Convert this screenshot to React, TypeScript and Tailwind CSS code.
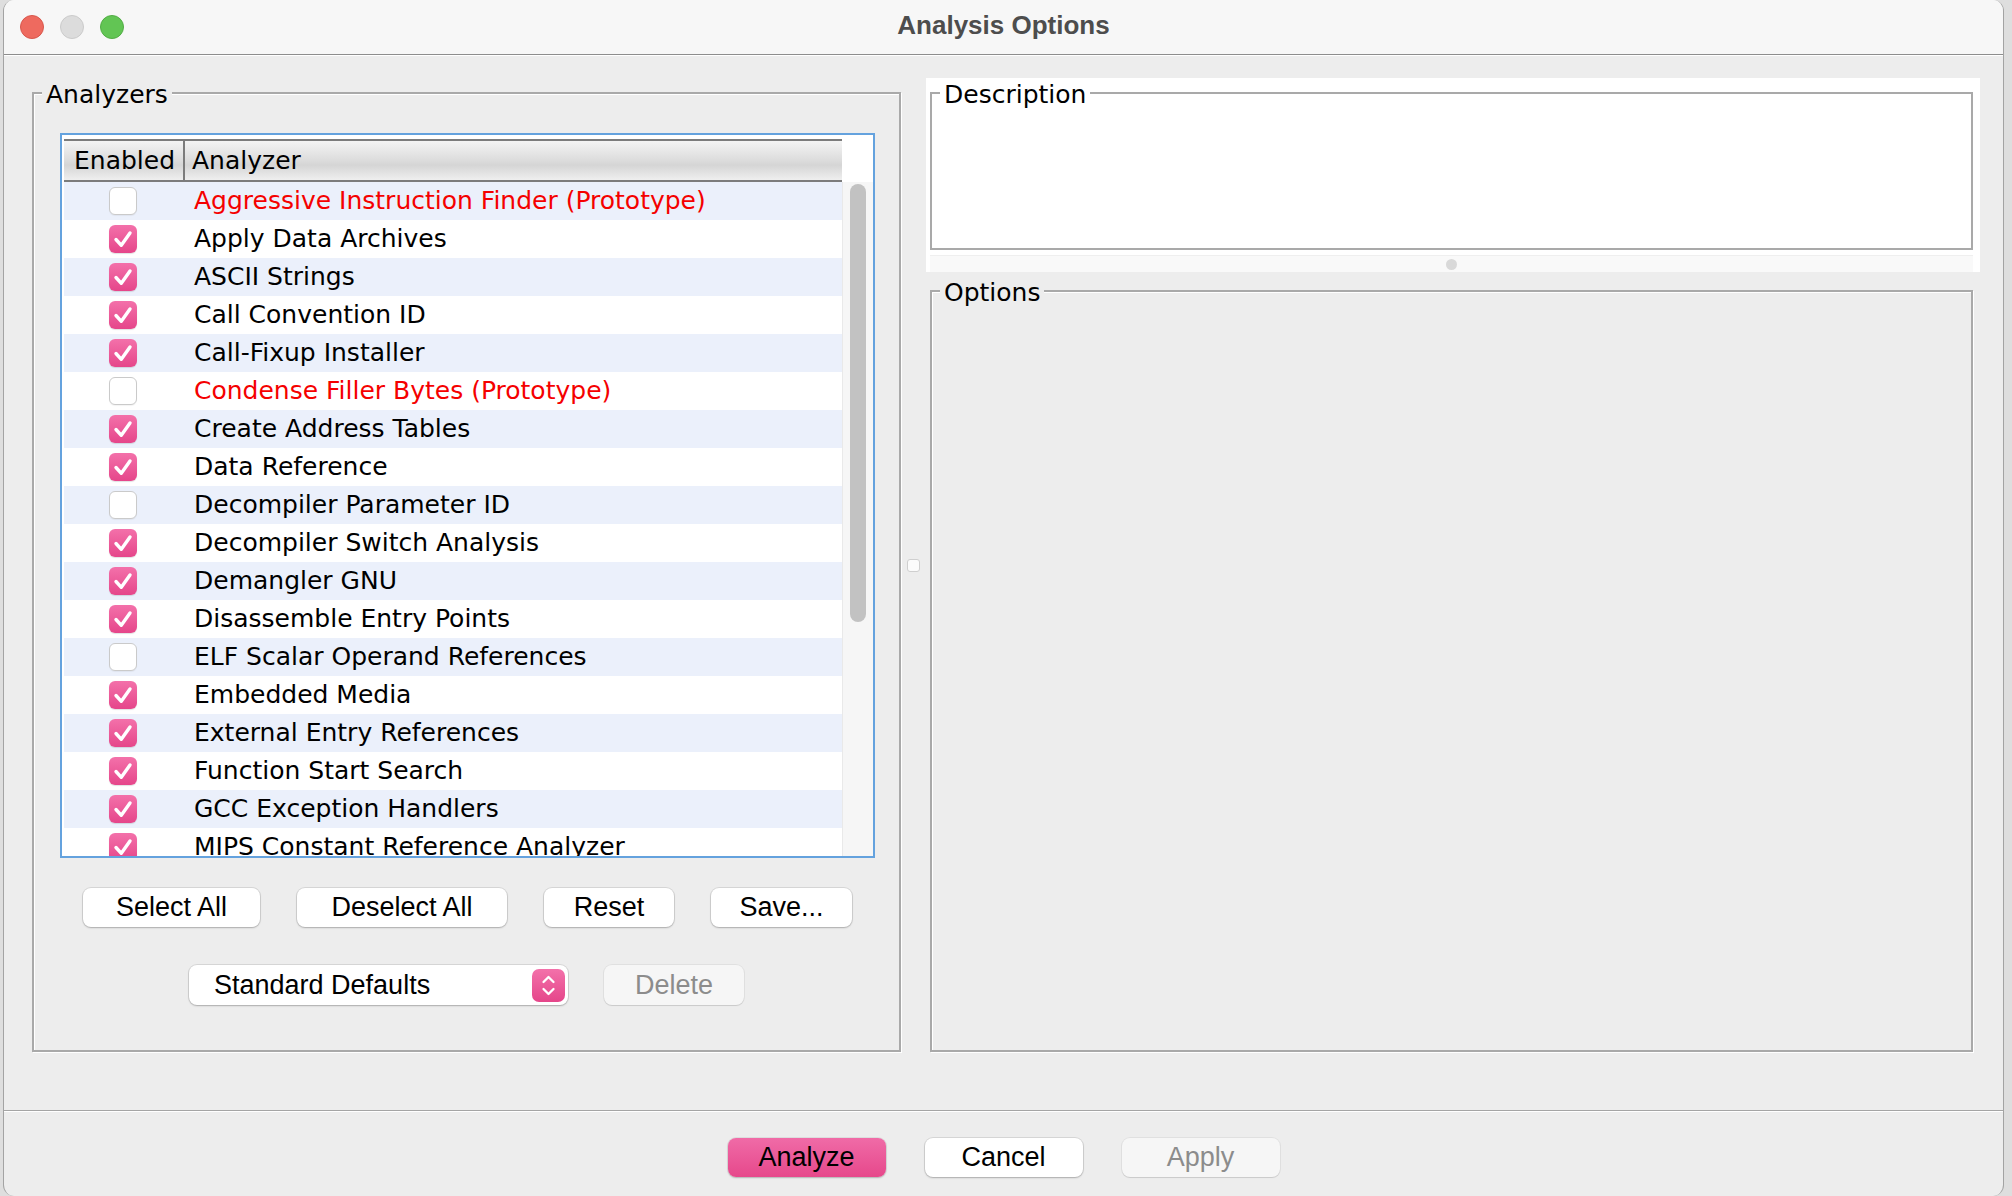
import React from 'react';

type Analyzer = { name: string; on: boolean; proto?: boolean };

const analyzers: Analyzer[] = [
  { name: 'Aggressive Instruction Finder (Prototype)', on: false, proto: true },
  { name: 'Apply Data Archives', on: true },
  { name: 'ASCII Strings', on: true },
  { name: 'Call Convention ID', on: true },
  { name: 'Call-Fixup Installer', on: true },
  { name: 'Condense Filler Bytes (Prototype)', on: false, proto: true },
  { name: 'Create Address Tables', on: true },
  { name: 'Data Reference', on: true },
  { name: 'Decompiler Parameter ID', on: false },
  { name: 'Decompiler Switch Analysis', on: true },
  { name: 'Demangler GNU', on: true },
  { name: 'Disassemble Entry Points', on: true },
  { name: 'ELF Scalar Operand References', on: false },
  { name: 'Embedded Media', on: true },
  { name: 'External Entry References', on: true },
  { name: 'Function Start Search', on: true },
  { name: 'GCC Exception Handlers', on: true },
  { name: 'MIPS Constant Reference Analyzer', on: true },
];

function Check({ on }: { on: boolean }) {
  if (!on) {
    return (
      <div className="w-[28px] h-[28px] rounded-[6px] bg-white border border-[#cacaca] shadow-[0_1px_1px_rgba(0,0,0,0.05)]" />
    );
  }
  return (
    <div className="w-[28px] h-[28px] rounded-[6px] bg-[linear-gradient(to_bottom,#f371aa,#e5468a)] shadow-[0_1px_1px_rgba(0,0,0,0.12)]">
      <svg width="28" height="28" viewBox="0 0 28 28">
        <path
          d="M7 14.5 L12.3 20.3 L21 8"
          fill="none"
          stroke="white"
          strokeWidth="3.4"
          strokeLinecap="round"
          strokeLinejoin="round"
        />
      </svg>
    </div>
  );
}

function TitledBox({
  title,
  legendBg,
  className,
  children,
}: {
  title: string;
  legendBg: string;
  className: string;
  children?: React.ReactNode;
}) {
  return (
    <div className={`relative border-2 border-[#a9a9a9] shadow-[inset_1px_1px_0_#fff,1px_1px_0_#fff] ${className}`}>
      <span className={`absolute left-[8px] top-[-14px] px-[4px] leading-[30px] text-[25px] ${legendBg}`}>
        {title}
      </span>
      {children}
    </div>
  );
}

function MacButton({ label, className }: { label: string; className: string }) {
  return (
    <button
      className={`h-[39px] rounded-[8px] bg-white text-[27px] leading-none text-black font-['Liberation_Sans',Arial,sans-serif] shadow-[0_0_0_1px_rgba(0,0,0,0.09),0_1px_2px_rgba(0,0,0,0.2)] flex items-center justify-center ${className}`}
    >
      {label}
    </button>
  );
}

function AnalyzerTable() {
  return (
    <div className="w-[815px] h-[725px] shrink-0 border-2 border-[#64a2de] bg-white flex pt-[4px] pl-[2px] overflow-hidden">
      <div className="w-[778px] flex flex-col">
        <div className="h-[43px] shrink-0 flex border-y-2 border-[#7c7c7c] bg-[linear-gradient(to_bottom,#f4f4f4_0%,#dcdcdc_50%,#d5d5d5_62%,#efefef_100%)] text-[25px]">
          <div className="w-[121px] pl-[10px] flex items-center border-r-2 border-[#7c7c7c]">Enabled</div>
          <div className="pl-[7px] flex items-center">Analyzer</div>
        </div>
        {analyzers.map((a, i) => (
          <div
            key={a.name}
            className={`h-[38px] shrink-0 flex items-center text-[25px] ${i % 2 === 0 ? 'bg-[#ebf0fb]' : 'bg-white'}`}
          >
            <div className="w-[123px] flex justify-center pr-[5px]">
              <Check on={a.on} />
            </div>
            <div className={`pl-[7px] whitespace-nowrap ${a.proto ? 'text-[#f50000]' : 'text-black'}`}>{a.name}</div>
          </div>
        ))}
      </div>
      <div className="w-[31px] flex flex-col">
        <div className="h-[43px] shrink-0 bg-white" />
        <div className="flex-1 bg-[#f6f6f6] border-l border-[#e9e9e9] pl-[7px] pt-[2px]">
          <div className="w-[16px] h-[438px] rounded-full bg-[#c2c2c2]" />
        </div>
      </div>
    </div>
  );
}

export default function App() {
  return (
    <div className="w-[2012px] h-[1196px] bg-[#dedede] flex overflow-hidden">
      <div className="ml-[3px] w-[2001px] h-[1196px] rounded-[11px] overflow-hidden border-x border-[#a3a3a3] bg-[#ededed] flex flex-col font-['DejaVu_Sans',sans-serif] text-black">
        {/* title bar */}
        <div className="h-[55px] shrink-0 grid grid-cols-[1fr_auto_1fr] items-center bg-[#f7f7f7] border-b border-[#8d8d8d]">
          <div className="flex items-center gap-[16px] pl-[16px]">
            <span className="w-[24px] h-[24px] rounded-full bg-[#ee6a5f] border border-[#d8574c]" />
            <span className="w-[24px] h-[24px] rounded-full bg-[#dcdcdc] border border-[#cbcbcb]" />
            <span className="w-[24px] h-[24px] rounded-full bg-[#62c554] border border-[#52ad45]" />
          </div>
          <div className="font-['Liberation_Sans',Arial,sans-serif] font-bold text-[26px] text-[#4d4d4d] pb-[4px]">
            Analysis Options
          </div>
          <div />
        </div>

        {/* main panel */}
        <div className="h-[1056px] shrink-0 border-t border-white border-b border-b-[#a5a5a5] flex pt-[22px] pb-[58px] pl-[28px]">
          <TitledBox title="Analyzers" legendBg="bg-[#ededed]" className="mt-[14px] w-[869px] pt-[39px] pl-[26px] pr-[24px] flex flex-col">
            <AnalyzerTable />
            <div className="mt-[30px] flex justify-center gap-[37px]">
              <MacButton label="Select All" className="w-[177px]" />
              <MacButton label="Deselect All" className="w-[210px]" />
              <MacButton label="Reset" className="w-[130px]" />
              <MacButton label="Save..." className="w-[141px]" />
            </div>
            <div className="mt-[38px] flex justify-center gap-[36px] pr-[2px]">
              <div className="w-[379px] h-[40px] rounded-[8px] bg-white shadow-[0_0_0_1px_rgba(0,0,0,0.09),0_1px_2px_rgba(0,0,0,0.2)] flex items-center justify-between pl-[25px] pr-[3px] font-['Liberation_Sans',Arial,sans-serif] text-[27px]">
                <span>Standard Defaults</span>
                <div className="w-[33px] h-[33px] rounded-[7px] bg-[linear-gradient(to_bottom,#f371aa,#e5468a)]">
                  <svg width="33" height="33" viewBox="0 0 33 33">
                    <path d="M11.5 13 L16.5 8 L21.5 13" fill="none" stroke="white" strokeWidth="2.3" strokeLinecap="round" strokeLinejoin="round" />
                    <path d="M11.5 20 L16.5 25 L21.5 20" fill="none" stroke="white" strokeWidth="2.3" strokeLinecap="round" strokeLinejoin="round" />
                  </svg>
                </div>
              </div>
              <button className="w-[140px] h-[40px] rounded-[8px] bg-[#f6f6f6] text-[#8c8c8c] text-[27px] leading-none font-['Liberation_Sans',Arial,sans-serif] shadow-[0_0_0_1px_rgba(0,0,0,0.05),0_1px_1px_rgba(0,0,0,0.1)] flex items-center justify-center">
                Delete
              </button>
            </div>
          </TitledBox>

          {/* split divider */}
          <div className="w-[25px] flex items-center justify-center">
            <div className="w-[13px] h-[13px] rounded-[3px] bg-[#fbfbfb] border border-[#cfcfcf]" />
          </div>

          {/* right column */}
          <div className="w-[1054px] flex flex-col">
            <div className="h-[194px] shrink-0 bg-white flex flex-col pt-[14px] pl-[4px] pr-[7px]">
              <TitledBox title="Description" legendBg="bg-white" className="h-[158px] w-[1043px]" />
              <div className="mt-[5px] h-[17px] bg-[#f9f9f9] border-t border-[#efefef] flex items-center justify-center">
                <div className="w-[11px] h-[11px] rounded-full bg-[#d9d9d9]" />
              </div>
            </div>
            <TitledBox title="Options" legendBg="bg-[#ededed]" className="mt-[18px] ml-[4px] w-[1043px] flex-1" />
          </div>
        </div>

        {/* bottom buttons */}
        <div className="flex-1 border-t border-white flex justify-center gap-[39px] pt-[26px]">
          <button className="w-[158px] h-[39px] rounded-[8px] bg-[linear-gradient(to_bottom,#f06ba7,#e6488b)] text-black text-[27px] leading-none font-['Liberation_Sans',Arial,sans-serif] shadow-[0_0_0_1px_rgba(0,0,0,0.06),0_1px_2px_rgba(0,0,0,0.2)] flex items-center justify-center">
            Analyze
          </button>
          <MacButton label="Cancel" className="w-[158px]" />
          <button className="w-[158px] h-[39px] rounded-[8px] bg-[#f6f6f6] text-[#8c8c8c] text-[27px] leading-none font-['Liberation_Sans',Arial,sans-serif] shadow-[0_0_0_1px_rgba(0,0,0,0.05),0_1px_1px_rgba(0,0,0,0.1)] flex items-center justify-center">
            Apply
          </button>
        </div>
      </div>
    </div>
  );
}
